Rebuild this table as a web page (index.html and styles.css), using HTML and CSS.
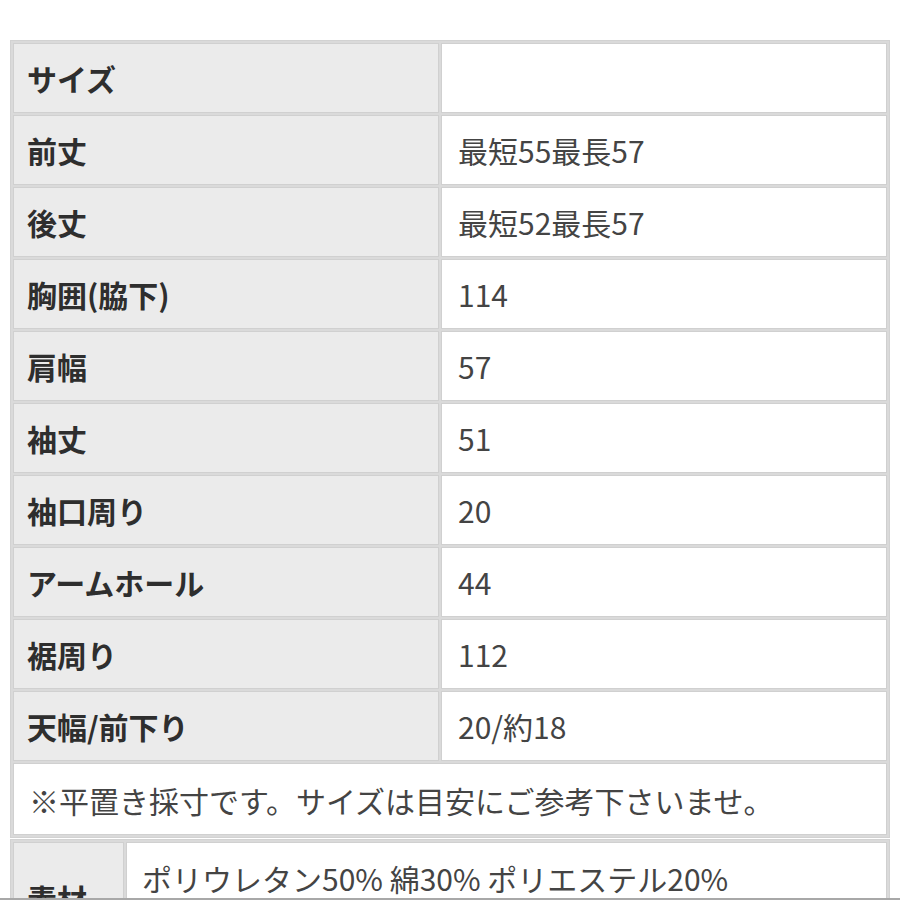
FILE: index.html
```html
<!DOCTYPE html>
<html lang="ja">
<head>
<meta charset="utf-8">
<link rel="stylesheet" href="styles.css">
</head>
<body>
<div class="page">
  <table class="spec">
    <tr><th>サイズ</th><td></td></tr>
    <tr><th>前丈</th><td>最短55最長57</td></tr>
    <tr><th>後丈</th><td>最短52最長57</td></tr>
    <tr><th>胸囲(脇下)</th><td>114</td></tr>
    <tr><th>肩幅</th><td>57</td></tr>
    <tr><th>袖丈</th><td>51</td></tr>
    <tr><th>袖口周り</th><td>20</td></tr>
    <tr><th>アームホール</th><td>44</td></tr>
    <tr><th>裾周り</th><td>112</td></tr>
    <tr><th>天幅/前下り</th><td>20/約18</td></tr>
    <tr><td class="note" colspan="2">※平置き採寸です。サイズは目安にご参考下さいませ。</td></tr>
  </table>
  <table class="spec material">
    <tr><th>素材</th><td class="mat">ポリウレタン50% 綿30% ポリエステル20%</td></tr>
  </table>
</div>
<div class="edge"></div>
</body>
</html>
```

FILE: styles.css
```css
html, body {
  margin: 0;
  padding: 0;
  background: #ffffff;
}
body {
  font-family: "Noto Sans CJK JP", "Noto Sans", sans-serif;
  font-size: 30px;
  color: #333333;
  overflow: hidden;
  height: 900px;
}
.page {
  padding: 40px 10px 0 10px;
}
.spec {
  width: 880px;
  border-collapse: separate;
  border-spacing: 2px;
  border: 1px solid #d2d2d2;
  background: #dadada;
  table-layout: fixed;
}
.spec th,
.spec td {
  height: 70px;
  box-sizing: border-box;
  border: 1px solid #d0d0d0;
  padding: 0 16px;
  text-align: left;
  vertical-align: middle;
  line-height: 1.3;
}
.spec th {
  width: 426px;
  background: #ebebeb;
  font-weight: bold;
  color: #2e2e2e;
  padding-left: 13px;
}
.spec td {
  background: #ffffff;
  font-weight: normal;
  color: #444444;
}
.spec td.note {
  height: 72px;
  padding-left: 15px;
  padding-top: 2px;
}
.material {
  margin-top: 1px;
}
.material th {
  width: 111px;
  height: 112px;
}
.material td.mat {
  vertical-align: top;
  padding: 16px 16px 40px 15px;
}
.edge {
  position: fixed;
  left: 0;
  right: 0;
  bottom: 0;
  height: 2px;
  background: #a8a8a8;
}
```
